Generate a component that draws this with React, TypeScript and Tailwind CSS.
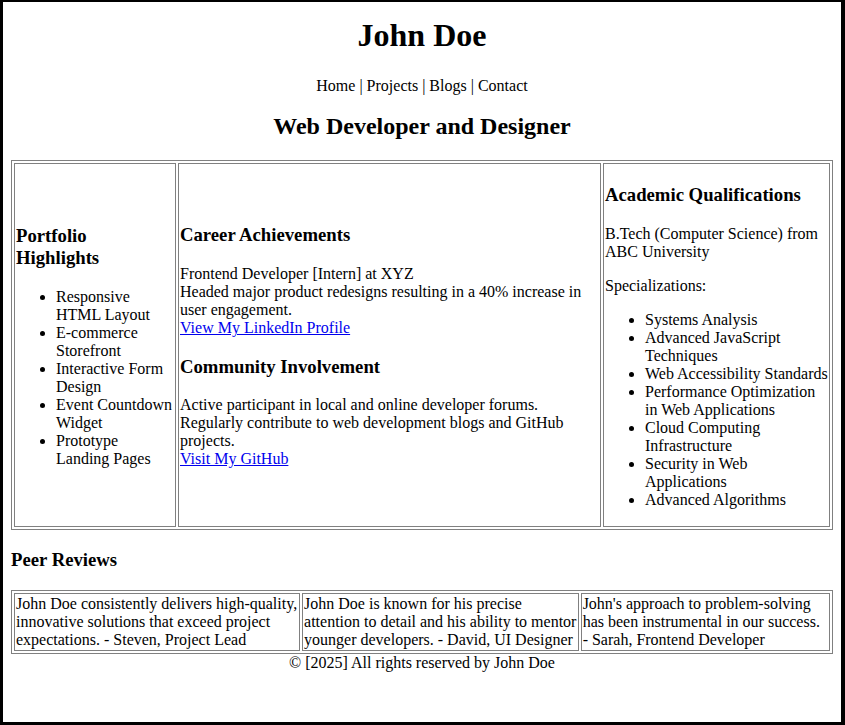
import React from 'react';

const Cell: React.FC<{ className?: string; children: React.ReactNode }> = ({ className = '', children }) => (
    <td className={`border border-[#808080] p-px align-middle ${className}`}>{children}</td>
);

const App: React.FC = () => {
    return (
        <div className="h-[725px] overflow-hidden border-t-2 border-l-[3px] border-r-4 border-b-[3px] border-black bg-white px-2 pt-[15px] text-base leading-[normal] text-black font-['Liberation_Serif',serif]">
            <h1 className="mb-[22.5px] text-center text-[32px] font-bold">John Doe</h1>
            <p className="m-0 text-center">Home | Projects | Blogs | Contact</p>
            <h2 className="mt-[18.9px] mb-[19.92px] text-center text-[24px] font-bold">Web Developer and Designer</h2>

            <table className="w-full border-separate border-spacing-[2px] border border-[#808080]">
                <tbody>
                    <tr>
                        <Cell className="w-[162px]">
                            <h3 className="my-[18.72px] text-[18.72px] font-bold">Portfolio Highlights</h3>
                            <ul className="my-4 list-disc pl-10">
                                <li>Responsive HTML Layout</li>
                                <li>E-commerce Storefront</li>
                                <li>Interactive Form Design</li>
                                <li>Event Countdown Widget</li>
                                <li>Prototype Landing Pages</li>
                            </ul>
                        </Cell>
                        <Cell className="w-[423px]">
                            <h3 className="my-[18.72px] text-[18.72px] font-bold">Career Achievements</h3>
                            <p className="my-4">
                                Frontend Developer [Intern] at XYZ<br />
                                Headed major product redesigns resulting in a 40% increase in user engagement.<br />
                                <a href="#" className="text-[#0000ee] underline">View My LinkedIn Profile</a>
                            </p>
                            <h3 className="my-[18.72px] text-[18.72px] font-bold">Community Involvement</h3>
                            <p className="my-4">
                                Active participant in local and online developer forums.<br />
                                Regularly contribute to web development blogs and GitHub projects.<br />
                                <a href="#" className="text-[#0000ee] underline">Visit My GitHub</a>
                            </p>
                        </Cell>
                        <Cell className="w-[227px]">
                            <h3 className="my-[18.72px] text-[18.72px] font-bold">Academic Qualifications</h3>
                            <p className="my-4">B.Tech (Computer Science) from ABC University</p>
                            <p className="my-4">Specializations:</p>
                            <ul className="my-4 list-disc pl-10">
                                <li>Systems Analysis</li>
                                <li>Advanced JavaScript Techniques</li>
                                <li>Web Accessibility Standards</li>
                                <li>Performance Optimization in Web Applications</li>
                                <li>Cloud Computing Infrastructure</li>
                                <li>Security in Web Applications</li>
                                <li>Advanced Algorithms</li>
                            </ul>
                        </Cell>
                    </tr>
                </tbody>
            </table>

            <h3 className="mt-[19.72px] mb-[18.72px] text-[18.72px] font-bold">Peer Reviews</h3>
            <table className="w-full border-separate border-spacing-[2px] border border-[#808080]">
                <tbody>
                    <tr>
                        <Cell>John Doe consistently delivers high-quality, innovative solutions that exceed project expectations. - Steven, Project Lead</Cell>
                        <Cell>John Doe is known for his precise attention to detail and his ability to mentor younger developers. - David, UI Designer</Cell>
                        <Cell>John's approach to problem-solving has been instrumental in our success. - Sarah, Frontend Developer</Cell>
                    </tr>
                </tbody>
            </table>
            <footer className="text-center">© [2025] All rights reserved by John Doe</footer>
        </div>
    );
};

export default App;
